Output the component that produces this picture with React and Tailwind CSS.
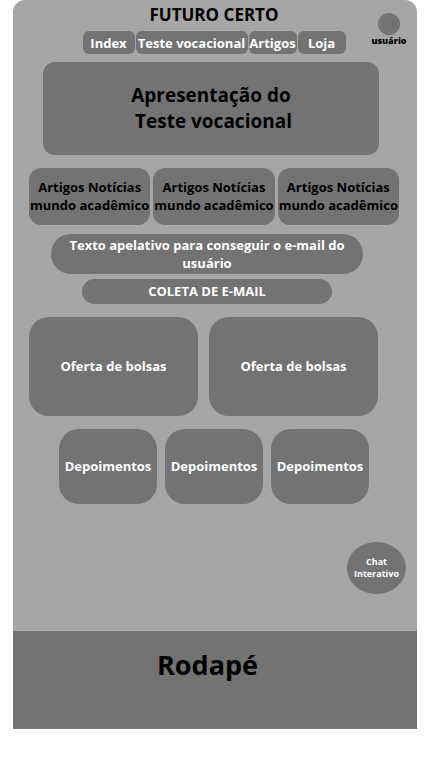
const links = [
  { label: 'Index', width: 'w-[52px]' },
  { label: 'Teste vocacional', width: 'w-28' },
  { label: 'Artigos', width: 'w-12' },
  { label: 'Loja', width: 'w-12' },
];

function Header() {
  return (
    <header className="flex">
      <div className="w-[68px] shrink-0" />
      <div className="flex flex-1 flex-col items-center">
        <h1 className="pt-1 text-[17px] leading-[22px] text-black">FUTURO CERTO</h1>
        <nav className="mt-[5px] flex gap-px">
          {links.map(({ label, width }) => (
            <a
              key={label}
              href="#"
              className={`${width} flex h-[23px] items-center justify-center rounded-md bg-[#737373] pt-0.5 text-[13px] whitespace-nowrap`}
            >
              {label}
            </a>
          ))}
        </nav>
      </div>
      <div className="flex w-[70px] shrink-0 flex-col items-center pt-[13px] pl-[14px]">
        <div className="size-[22px] rounded-full bg-[#737373]" />
        <span className="text-[9px] leading-[11px] font-extrabold text-black">usuário</span>
      </div>
    </header>
  );
}

export default function App() {
  return (
    <div className="min-h-screen bg-white font-['Open_Sans','Noto_Sans',sans-serif] font-bold text-white">
      <div className="mr-[11px] ml-[13px] overflow-hidden rounded-t-xl bg-[#a6a6a6]">
        <Header />
        <main className="text-center text-[13px] leading-[18px]">
          <section className="mt-2 mr-[38px] ml-[30px] flex h-[93px] items-center justify-center rounded-xl bg-[#737373] pb-0.5">
            <h2 className="text-[19px] leading-[26px] text-black">
              Apresentação do
              <br />
              &nbsp;Teste vocacional
            </h2>
          </section>

          <section className="mt-[13px] mr-[18px] ml-4 grid grid-cols-3 gap-[3px] text-black">
            {[1, 2, 3].map((id) => (
              <article key={id} className="flex h-[57px] items-center justify-center rounded-xl bg-[#737373] pb-0.5 whitespace-nowrap">
                Artigos Notícias
                <br />
                mundo acadêmico
              </article>
            ))}
          </section>

          <form>
            <label
              htmlFor="email"
              className="mt-[9px] mr-[54px] ml-[38px] flex h-10 items-center justify-center rounded-[20px] bg-[#737373] px-4"
            >
              Texto apelativo para conseguir o e-mail do usuário
            </label>
            <div className="mt-[5px] mr-[85px] ml-[69px] flex">
              <input
                id="email"
                type="email"
                placeholder="COLETA DE E-MAIL"
                className="h-[25px] w-full rounded-full bg-[#737373] pb-0.5 text-center text-[13px] placeholder:text-white placeholder:opacity-100"
              />
            </div>
          </form>

          <section className="mt-[13px] mr-[39px] ml-4 grid grid-cols-2 gap-[11px]">
            {[1, 2].map((id) => (
              <article key={id} className="flex h-[99px] items-center justify-center rounded-[20px] bg-[#737373] pb-0.5">
                Oferta de bolsas
              </article>
            ))}
          </section>

          <section className="mt-[13px] mr-12 ml-[46px] grid grid-cols-3 gap-2">
            {[1, 2, 3].map((id) => (
              <article key={id} className="flex h-[75px] items-center justify-center rounded-[20px] bg-[#737373] pb-0.5">
                Depoimentos
              </article>
            ))}
          </section>

          <div className="mt-[38px] mr-[11px] mb-[37px] flex justify-end">
            <button type="button" className="h-[52px] w-[59px] rounded-[50%] bg-[#737373] text-[9px] leading-3">
              Chat
              <br />
              Interativo
            </button>
          </div>
        </main>
        <footer className="h-[98px] bg-[#737373] pt-4 pr-[15px] text-center text-[27px] leading-9 text-black">
          Rodapé
        </footer>
      </div>
    </div>
  );
}
